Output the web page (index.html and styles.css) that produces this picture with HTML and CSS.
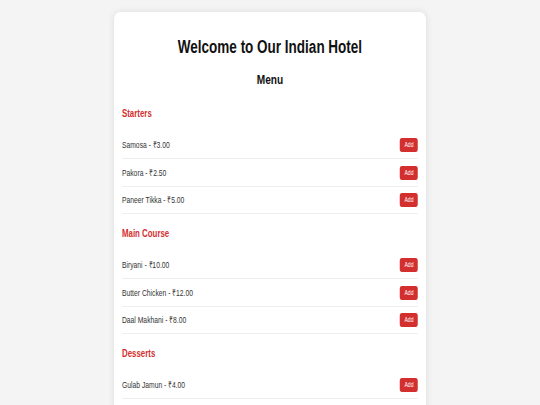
FILE: index.html
```html
<!DOCTYPE html>
<html lang="en">
<head>
  <meta charset="UTF-8">
  <meta name="viewport" content="width=device-width, initial-scale=1.0">
  <title>Indian Hotel Menu</title>
  <link rel="stylesheet" href="styles.css">
</head>
<body>

  <div class="container">
    <h1>Welcome to Our Indian Hotel</h1>
    <h2>Menu</h2>

    <!-- Starters -->
    <div class="category">
      <h3>Starters</h3>
      <div class="menu-item">
        <span>Samosa - ₹3.00</span>
        <button class="add-btn">Add</button>
      </div>
      <div class="menu-item">
        <span>Pakora - ₹2.50</span>
        <button class="add-btn">Add</button>
      </div>
      <div class="menu-item">
        <span>Paneer Tikka - ₹5.00</span>
        <button class="add-btn">Add</button>
      </div>
    </div>

    <!-- Main Course -->
    <div class="category">
      <h3>Main Course</h3>
      <div class="menu-item">
        <span>Biryani - ₹10.00</span>
        <button class="add-btn">Add</button>
      </div>
      <div class="menu-item">
        <span>Butter Chicken - ₹12.00</span>
        <button class="add-btn">Add</button>
      </div>
      <div class="menu-item">
        <span>Daal Makhani - ₹8.00</span>
        <button class="add-btn">Add</button>
      </div>
    </div>

    <!-- Desserts -->
    <div class="category">
      <h3>Desserts</h3>
      <div class="menu-item">
        <span>Gulab Jamun - ₹4.00</span>
        <button class="add-btn">Add</button>
      </div>
      <div class="menu-item">
        <span>Rasgulla - ₹3.50</span>
        <button class="add-btn">Add</button>
      </div>
    </div>
  </div>

</body>
</html>
```

FILE: styles.css
```css
body {
  font-family: 'Liberation Sans', Arial, sans-serif;
  background-color: #f4f4f4;
  margin: 0;
  padding-top: 12px;
  color: #333;
}
/* the page is drawn narrow: everything is squeezed to 3/4 of its width */
.container {
  box-sizing: border-box;
  width: 416px;
  margin: 0 auto;
  padding: 11px 10.67px 20px;
  background-color: #fff;
  border-radius: 8px;
  box-shadow: 0 0 8px rgba(0, 0, 0, 0.1);
  transform: scaleX(0.75);
}
h1 {
  text-align: center;
  font-size: 18px;
  line-height: 20px;
  margin: 14px 0 15px;
  color: #111;
}
h2 {
  text-align: center;
  font-size: 13.5px;
  line-height: 16px;
  margin: 0 0 19px;
  color: #111;
}
.category h3 {
  color: #d32f2f;
  font-size: 10.5px;
  line-height: 12px;
  margin: 0 0 12.5px;
}
.category + .category {
  margin-top: 13px;
}
.menu-item {
  display: flex;
  justify-content: space-between;
  align-items: center;
  font-size: 9px;
  line-height: 10px;
  padding: 6.5px 0 6px;
  border-bottom: 1px solid #eee;
}
.add-btn {
  background-color: #d32f2f;
  color: white;
  border: none;
  font-family: inherit;
  font-size: 6.75px;
  line-height: 8px;
  height: 14px;
  padding: 3px 6px;
  border-radius: 3px;
  cursor: pointer;
}
```
